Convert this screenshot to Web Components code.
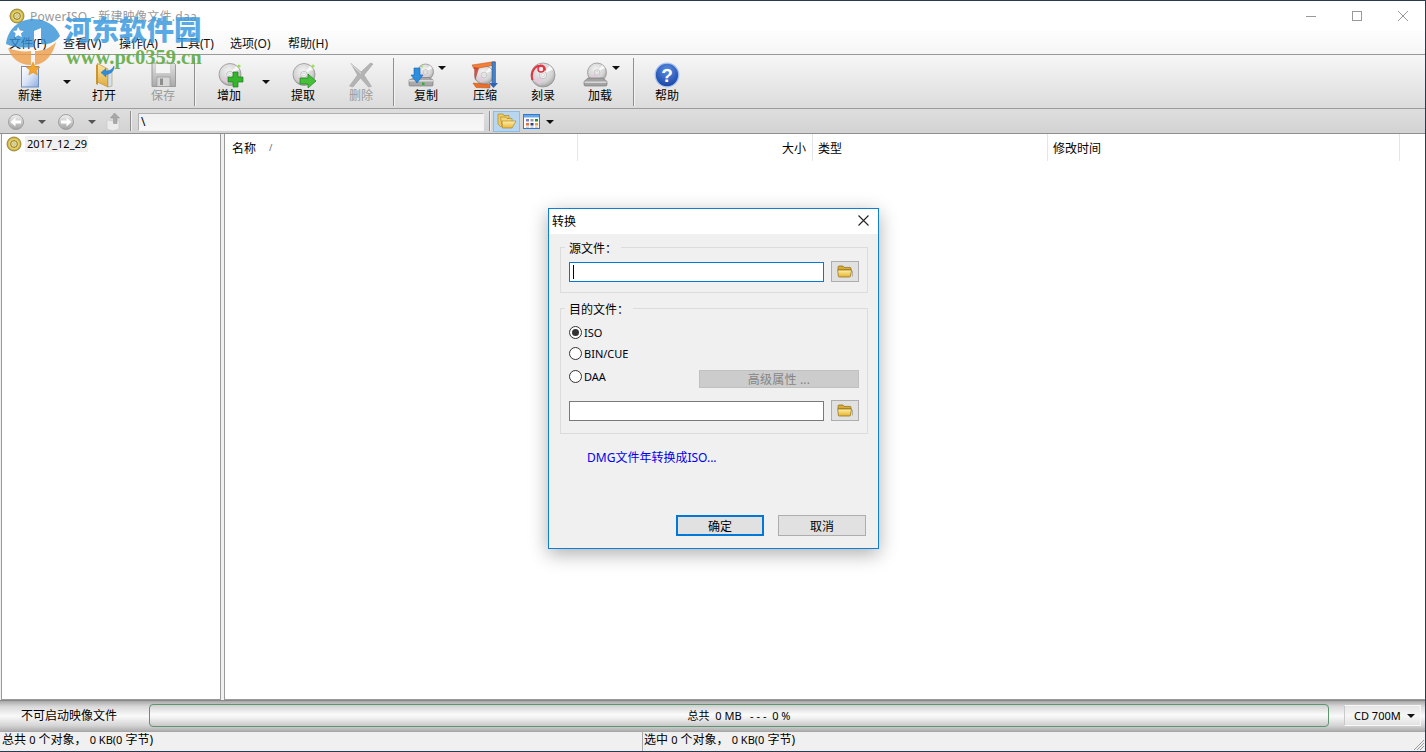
<!DOCTYPE html>
<html lang="zh">
<head>
<meta charset="utf-8">
<title>PowerISO</title>
<style>
  html, body { margin: 0; height: 100%; overflow: hidden; background: #f0f0f0; }
  body { font: 12px "Noto Sans", "Noto Sans CJK SC", sans-serif; color: #000; }
</style>
</head>
<body>
<app-window></app-window>
<script>
const UI_FONT = `"Noto Sans", "Noto Sans CJK SC", sans-serif`;

function disc(cx, cy, r, id) {
  return `
    <radialGradient id="${id}" cx="45%" cy="35%" r="75%">
      <stop offset="0" stop-color="#f4f4f4"/><stop offset=".6" stop-color="#d2d2d2"/><stop offset="1" stop-color="#8c8c8c"/>
    </radialGradient>
    <circle cx="${cx}" cy="${cy}" r="${r}" fill="url(#${id})" stroke="#8a8a8a" stroke-width=".7"/>
    <path d="M${cx - r * 0.85} ${cy + r * 0.4}L${cx - r * 0.1} ${cy + r * 0.1}L${cx - r * 0.2} ${cy + r * 0.85}Z" fill="#e6c8df" opacity=".8"/>
    <path d="M${cx + r * 0.1} ${cy - r * 0.15}L${cx + r * 0.55} ${cy - r * 0.8}L${cx + r * 0.85} ${cy - r * 0.45}Z" fill="#fff" opacity=".8"/>
    <circle cx="${cx}" cy="${cy}" r="${r * 0.3}" fill="#efefef" stroke="#a0a0a0" stroke-width=".5"/>
    <circle cx="${cx}" cy="${cy}" r="${r * 0.12}" fill="#fff" stroke="#aaa" stroke-width=".4"/>`;
}

function goldFolder(w, h) {
  return `<svg width="${w}" height="${h}" viewBox="0 0 16 13">
    <defs><linearGradient id="gf" x1="0" y1="0" x2="0" y2="1"><stop offset="0" stop-color="#fff0a8"/><stop offset="1" stop-color="#e4b32e"/></linearGradient></defs>
    <path d="M1 2.2Q1 1 2 1H6L7 2.4H13Q14 2.4 14 3.4V5H1Z" fill="#d8ab36" stroke="#8c6a14" stroke-width=".7"/>
    <path d="M.7 5H14.6L13.4 11.4Q13.3 12 12.6 12H2.2Q1.5 12 1.4 11.4Z" fill="url(#gf)" stroke="#8c6a14" stroke-width=".7"/>
    <path d="M15.4 6V11.6" stroke="#555" stroke-width=".8" opacity=".5"/>
  </svg>`;
}

const ICONS = {
  new: `<svg width="32" height="26" viewBox="0 0 32 26">
    <defs><linearGradient id="nw" x1="0" y1="0" x2="1" y2="1"><stop offset="0" stop-color="#fff"/><stop offset=".5" stop-color="#dbe5f7"/><stop offset="1" stop-color="#8fabdf"/></linearGradient></defs>
    <rect x="7.500" y="4.500" width="17" height="20.500" fill="url(#nw)" stroke="#6f8dbd"/>
    <path d="M19 0l2 4.600 5 .4-3.800 3.200 1.200 4.800-4.400-2.600-4.200 2.600 1.200-4.800L12 5l5-.4z" fill="#f3a52e" stroke="#e2861a" stroke-width=".5"/>
  </svg>`,
  open: `<svg width="32" height="26" viewBox="0 0 32 26">
    <defs><linearGradient id="op" x1="0" y1="0" x2="0" y2="1"><stop offset="0" stop-color="#fbe7a2"/><stop offset="1" stop-color="#e0ab3d"/></linearGradient></defs>
    <path d="M8 3l2-1v21l-2-1z" fill="#c99431"/>
    <path d="M9.500 1.500L20 7v18L9.500 20z" fill="url(#op)" stroke="#b58425" stroke-width=".6"/>
    <path d="M20 9l4 1v14l-4 1z" fill="#d4e2ef" stroke="#9a8a50" stroke-width=".5"/>
    <path d="M13 10.500l5-4v2.500c3 0 6-1 8-5 .4 4.500-2.500 8-8 8.500v2.500z" fill="#2d8fdc" stroke="#1865ad" stroke-width=".4"/>
  </svg>`,
  save: `<svg width="28" height="26" viewBox="0 0 28 26">
    <defs><linearGradient id="sv" x1="0" y1="0" x2="0" y2="1"><stop offset="0" stop-color="#e2e2e2"/><stop offset="1" stop-color="#a9a9a9"/></linearGradient></defs>
    <path d="M3 1H25L26.500 2.500V24.500H3Z" fill="url(#sv)" stroke="#9b9b9b"/>
    <rect x="6.500" y="1.500" width="15" height="10" fill="#f4f4f4" stroke="#bbb" stroke-width=".5"/>
    <rect x="8" y="15" width="13" height="9.500" fill="#d7d7d7" stroke="#919191" stroke-width=".6"/>
    <rect x="11" y="16.500" width="3" height="6.500" fill="#8e8e8e"/>
  </svg>`,
  add: `<svg width="30" height="26" viewBox="0 0 30 26">${disc(16, 12.500, 11, "da")}
    <circle cx="25" cy="4" r="1.600" fill="#9be34e"/>
    <path d="M19 10h5v5h5v5h-5v5h-5v-5h-5v-5h5z" fill="#35b52c" stroke="#1a7f1d" stroke-width=".7"/>
  </svg>`,
  extract: `<svg width="30" height="26" viewBox="0 0 30 26">${disc(16, 12.500, 11, "de")}
    <circle cx="25" cy="4" r="1.600" fill="#9be34e"/>
    <path d="M12 16h8v-4l8 7-8 7v-4h-8z" fill="#46c038" stroke="#1a7f1d" stroke-width=".7"/>
  </svg>`,
  del: `<svg width="26" height="26" viewBox="0 0 26 26">
    <path d="M3 1.500L13 10 22.500 1l2.500 1-9 11 7.500 11.500-3 .5L12.500 16 5 25l-3.500-1 8-11z" fill="#b4b4b4" stroke="#9a9a9a" stroke-width=".5"/>
    <path d="M3.500 2.500L13 11.500" stroke="#e4e4e4"/>
  </svg>`,
  copy: `<svg width="36" height="26" viewBox="-18 0 36 26">${disc(-0.5, 10, 8, "dc")}
    <path d="M-17 18L-11 15.500H3L7 18v5q0 1-1 1h-22q-1 0-1-1z" fill="#a9a9a9" stroke="#737373" stroke-width=".6"/>
    <path d="M-17 18h24v1.500h-24z" fill="#dcdcdc"/>
    <rect x="-4" y="20.500" width="2.500" height="2.500" fill="#31b33a"/>
    <circle cx="-4" cy="4.500" r="1" fill="#9be34e"/>
    <path d="M-12 6h6v7h3l-6 8-6-8h3z" fill="#2b8edf" stroke="#1663ac" stroke-width=".6"/>
  </svg>`,
  compress: `<svg width="28" height="28" viewBox="0 0 28 28">
    ${disc(13, 14, 9.500, "dz")}
    <path d="M1 4L24 .5v3.500L3 8z" fill="#f0803a" stroke="#b84a12" stroke-width=".5"/>
    <path d="M2 22l17 1.500v3.500L5 26.500z" fill="#ea6f2b" stroke="#b84a12" stroke-width=".5"/>
    <rect x="21" y="1" width="3.500" height="23" fill="#4780c4" stroke="#27518c" stroke-width=".5"/>
    <path d="M18 22h9l-4.500 5z" fill="#2b65b5"/>
    <path d="M3 6l5 1-4 13z" fill="#c33c28" opacity=".8"/>
  </svg>`,
  burn: `<svg width="26" height="26" viewBox="0 0 26 26">${disc(13, 13, 12, "db")}
    <path d="M2.500 18C0 10 5 4 10 3.500 14 3 15 6 15 8.500" fill="none" stroke="#e53341" stroke-width="2"/>
    <circle cx="11" cy="7" r="3" fill="none" stroke="#e53341" stroke-width="1.500"/>
  </svg>`,
  mount: `<svg width="36" height="26" viewBox="-18 0 36 26">${disc(-3, 10.500, 9.500, "dm")}
    <path d="M-16 19.500L-12 16H3L7 19.500v3q0 1.500-1.500 1.500h-20q-1.500 0-1.500-1.500z" fill="#a3a3a3" stroke="#707070" stroke-width=".6"/>
    <path d="M-15.500 19.500h22v1.500h-22z" fill="#d8d8d8"/>
  </svg>`,
  help: `<svg width="26" height="26" viewBox="0 0 26 26">
    <defs><radialGradient id="hp" cx="50%" cy="30%" r="75%"><stop offset="0" stop-color="#5d8fe4"/><stop offset="1" stop-color="#123f9f"/></radialGradient></defs>
    <circle cx="13" cy="13" r="11.800" fill="url(#hp)" stroke="#a9c4ee" stroke-width="1.300"/>
    <text x="13" y="20" text-anchor="middle" font-family="Liberation Sans, sans-serif" font-weight="700" font-size="19" fill="#fff">?</text>
  </svg>`,
  back: `<svg width="22" height="22" viewBox="0 0 22 22">
    <defs><linearGradient id="nv1" x1="0" y1="0" x2="0" y2="1"><stop offset="0" stop-color="#f2f2f2"/><stop offset="1" stop-color="#a2a2a2"/></linearGradient></defs>
    <circle cx="11" cy="11" r="7.500" fill="url(#nv1)" stroke="#a0a0a0"/>
    <path d="M5.500 11L10.500 6.500V9.500H16V12.500H10.500V15.500Z" fill="#fff"/>
  </svg>`,
  forward: `<svg width="22" height="22" viewBox="0 0 22 22">
    <defs><linearGradient id="nv2" x1="0" y1="0" x2="0" y2="1"><stop offset="0" stop-color="#f2f2f2"/><stop offset="1" stop-color="#a2a2a2"/></linearGradient></defs>
    <circle cx="11" cy="11" r="7.500" fill="url(#nv2)" stroke="#a0a0a0"/>
    <path d="M16.500 11L11.500 6.500V9.500H6V12.500H11.500V15.500Z" fill="#fff"/>
  </svg>`,
  up: `<svg width="20" height="20" viewBox="0 0 20 20">
    <path d="M4 8L10 9 16 8V17L10 19 4 17Z" fill="#ececec" stroke="#c8c8c8" stroke-width=".6"/>
    <path d="M11.500 1L16.500 6H14V11.500H10.500V6H7.500Z" fill="#a8a8a8" stroke="#8f8f8f" stroke-width=".5"/>
  </svg>`,
  folders: `<svg width="20" height="18" viewBox="0 0 20 18">
    <defs><linearGradient id="fs" x1="0" y1="0" x2="0" y2="1"><stop offset="0" stop-color="#fff0ae"/><stop offset="1" stop-color="#e7b63d"/></linearGradient></defs>
    <path d="M1 2H6L7 3.500H12V10L4 15 1 12Z" fill="#eccb67" stroke="#b28924" stroke-width=".7"/>
    <path d="M3.500 5H9L10 6.500H15V14H5Z" fill="#f2d67c" stroke="#b28924" stroke-width=".7"/>
    <path d="M5 9H19L15 16H5.500Z" fill="url(#fs)" stroke="#b28924" stroke-width=".7"/>
  </svg>`,
  views: `<svg width="17" height="15" viewBox="0 0 17 15">
    <rect x=".5" y=".5" width="16" height="14" fill="#fff" stroke="#2c7bd0"/>
    <rect x="1" y="1" width="15" height="2.500" fill="#69a7e4"/>
    <rect x="3" y="5" width="3" height="2.500" fill="#7e7ecc"/><rect x="7.500" y="5" width="3" height="2.500" fill="#9a9a9a"/><rect x="12" y="5" width="3" height="2.500" fill="#1d8f3e"/>
    <rect x="3" y="9" width="3" height="2.500" fill="#e8703a"/><rect x="7.500" y="9" width="3" height="2.500" fill="#27408f"/><rect x="12" y="9" width="3" height="2.500" fill="#e9a33b"/>
    <rect x="3" y="12.500" width="3" height="1.200" fill="#bbb"/><rect x="7.500" y="12.500" width="3" height="1.200" fill="#bbb"/><rect x="12" y="12.500" width="3" height="1.200" fill="#bbb"/>
  </svg>`,
  cd: `<svg width="16" height="16" viewBox="0 0 16 16">
    <defs><radialGradient id="cdg"><stop offset="0" stop-color="#fff6c0"/><stop offset=".7" stop-color="#e4d066"/><stop offset="1" stop-color="#b69a2c"/></radialGradient></defs>
    <circle cx="8" cy="8" r="7" fill="url(#cdg)" stroke="#8f7a28" stroke-width=".8"/>
    <circle cx="8" cy="8" r="3.400" fill="none" stroke="#7d6a22" stroke-width=".9"/>
    <circle cx="8" cy="8" r="1.300" fill="#fff" stroke="#7d6a22" stroke-width=".5"/>
  </svg>`
};

class ToolButton extends HTMLElement {
  connectedCallback() {
    const icon = this.getAttribute("icon");
    const label = this.getAttribute("label");
    this.attachShadow({ mode: "open" }).innerHTML = `
      <style>
        :host { display: flex; flex-direction: column; align-items: center; width: 58px; height: 53px; flex: none; font-size: 12px; color: ${this.hasAttribute("disabled") ? "#9a9a9a" : "#000"}; position: relative; }
        .icon { height: 28px; margin-top: 6px; display: flex; align-items: center; justify-content: center; }
        .label { line-height: 16px; margin-top: -1px; }
        .caret { position: absolute; left: 41px; top: 11px; width: 0; height: 0; border: 4px solid transparent; border-top: 4px solid #111; border-bottom: 0; }
      </style>
      <div class="icon">${ICONS[icon]}</div>
      <div class="label">${label}</div>
      ${this.hasAttribute("caret") ? '<span class="caret"></span>' : ""}
    `;
  }
}
customElements.define("tool-button", ToolButton);

class TitleBar extends HTMLElement {
  constructor() {
    super();
    this.attachShadow({ mode: "open" }).innerHTML = `
      <style>
        :host { display: flex; align-items: center; height: 29px; background: #fff; color: #9a9a9a; font-size: 12px; padding-left: 9px; }
        .cd { margin-right: 5px; margin-top: 1px; display: flex; }
        .title { flex: 1; letter-spacing: .25px; }
        .btns { display: flex; }
        .btn { width: 46px; height: 29px; display: flex; align-items: center; justify-content: center; }
      </style>
      <span class="cd">${ICONS.cd}</span>
      <span class="title">PowerISO - 新建映像文件.daa</span>
      <div class="btns">
        <div class="btn"><svg width="10" height="10"><path d="M0 5.500H10" stroke="#999"/></svg></div>
        <div class="btn"><svg width="10" height="10"><rect x=".5" y=".5" width="9" height="9" fill="none" stroke="#999"/></svg></div>
        <div class="btn" style="margin-right:-1px"><svg width="10" height="10"><path d="M0 0L10 10M10 0L0 10" stroke="#999"/></svg></div>
      </div>
    `;
  }
}
customElements.define("title-bar", TitleBar);

class MenuBar extends HTMLElement {
  constructor() {
    super();
    const items = [["文件(F)", 54], ["查看(V)", 56], ["操作(A)", 57], ["工具(T)", 54], ["选项(O)", 58], ["帮助(H)", 60]];
    this.attachShadow({ mode: "open" }).innerHTML = `
      <style>
        :host { display: flex; align-items: center; height: 23px; padding: 1px 0 0 9px; font-size: 12px; background: linear-gradient(#fdfdfd, #f6f6f6); color: #111; border-bottom: 1px solid #999; }
        span { flex: none; }
      </style>
      ${items.map(([t, w]) => `<span style="width:${w}px">${t}</span>`).join("")}
    `;
  }
}
customElements.define("menu-bar", MenuBar);

class MainToolbar extends HTMLElement {
  constructor() {
    super();
    this.attachShadow({ mode: "open" }).innerHTML = `
      <style>
        :host { display: flex; height: 53px; padding-left: 1px; background: linear-gradient(#f6f6f6, #dcdcdc); border-bottom: 1px solid #9c9c9c; }
        .sep { flex: none; width: 2px; height: 48px; margin-top: 3px; background: #8f8f8f; border-right: 1px solid #f4f4f4; box-sizing: border-box; }
        .drop { flex: none; width: 16px; position: relative; }
        .drop::after { content: ""; position: absolute; left: 4px; top: 25px; border: 4px solid transparent; border-top: 4px solid #111; border-bottom: 0; }
      </style>
      <tool-button icon="new" label="新建"></tool-button><div class="drop"></div>
      <tool-button icon="open" label="打开"></tool-button>
      <tool-button icon="save" label="保存" disabled style="margin-left:1px"></tool-button>
      <div class="sep" style="margin-left:2px;margin-right:4px"></div>
      <tool-button icon="add" label="增加"></tool-button><div class="drop"></div>
      <tool-button icon="extract" label="提取"></tool-button>
      <tool-button icon="del" label="删除" disabled></tool-button>
      <div class="sep" style="margin-left:3px;margin-right:2px"></div>
      <tool-button icon="copy" label="复制" caret></tool-button>
      <tool-button icon="compress" label="压缩" style="margin-left:1px"></tool-button>
      <tool-button icon="burn" label="刻录"></tool-button>
      <tool-button icon="mount" label="加载" caret style="margin-left:-1px"></tool-button>
      <div class="sep" style="margin-left:4px;margin-right:3px"></div>
      <tool-button icon="help" label="帮助"></tool-button>
    `;
  }
}
customElements.define("main-toolbar", MainToolbar);

class NavBar extends HTMLElement {
  constructor() {
    super();
    this.attachShadow({ mode: "open" }).innerHTML = `
      <style>
        :host { display: flex; align-items: center; height: 24px; background: linear-gradient(#dedede, #d2d2d2); border-bottom: 1px solid #8f8f8f; padding-left: 5px; }
        .i { display: flex; flex: none; margin-top: 1px; }
        .caret { flex: none; width: 0; height: 0; margin-top: 1px; border: 4px solid transparent; border-top: 4px solid #555; border-bottom: 0; }
        .sep { flex: none; width: 1px; height: 20px; background: #8f8f8f; box-shadow: 1px 0 #eee; }
        .path { flex: none; width: 346px; height: 18px; margin-top: 1px; box-sizing: border-box; background: linear-gradient(#f1f1f1, #f7f7f7); border: 1px solid #bdbdbd; border-color: #b0b0b0 #f2f2f2 #f2f2f2 #b0b0b0; line-height: 16px; padding-left: 2px; font-size: 12px; }
        .on { flex: none; width: 27px; height: 21px; background: #b9d6f1; border: 1px solid #8dbce8; box-sizing: border-box; display: flex; align-items: center; justify-content: center; }
      </style>
      <span class="i">${ICONS.back}</span>
      <span class="caret" style="margin-left:11px"></span>
      <span class="i" style="margin-left:9px">${ICONS.forward}</span>
      <span class="caret" style="margin-left:11px"></span>
      <span class="i" style="margin-left:7px">${ICONS.up}</span>
      <span class="sep" style="margin-left:7px"></span>
      <span class="path" style="margin-left:7px">\\</span>
      <span class="sep" style="margin-left:5px"></span>
      <span class="on" style="margin-left:3px">${ICONS.folders}</span>
      <span class="i" style="margin-left:3px">${ICONS.views}</span>
      <span class="caret" style="margin-left:6px;border-top-color:#111"></span>
    `;
  }
}
customElements.define("nav-bar", NavBar);

class TreePane extends HTMLElement {
  constructor() {
    super();
    this.attachShadow({ mode: "open" }).innerHTML = `
      <style>
        :host { display: block; width: 218px; flex: none; background: #fff; border: 1px solid #9a9a9a; border-top: 0; margin-left: 1px; }
        .row { display: flex; align-items: center; padding: 0 0 0 4px; height: 19px; }
        .name { background: #f0f0f0; padding: 0 1px 0 2px; line-height: 16px; margin-left: 3px; font-size: 11px; font-family: "Noto Sans", sans-serif; }
      </style>
      <div class="row">${ICONS.cd}<span class="name">2017_12_29</span></div>
    `;
  }
}
customElements.define("tree-pane", TreePane);

class ListPane extends HTMLElement {
  constructor() {
    super();
    this.attachShadow({ mode: "open" }).innerHTML = `
      <style>
        :host { display: block; flex: 1; min-width: 0; background: #fff; border: 1px solid #9a9a9a; border-top: 0; border-right: 0; margin-left: 3px; }
        .head { display: grid; grid-template-columns: 353px 235px 235px 352px; height: 27px; font-size: 12px; }
        .c { border-right: 1px solid #e5e5e5; padding: 0 6px 0 5px; display: flex; align-items: center; }
        .c.first { padding-left: 7px; }
        .sort { margin-left: 13px; margin-top: -1px; color: #666; font-size: 9px; }
        .r { justify-content: flex-end; }
      </style>
      <div class="head">
        <div class="c first">名称<span class="sort">/</span></div>
        <div class="c r">大小</div>
        <div class="c">类型</div>
        <div class="c">修改时间</div>
      </div>
    `;
  }
}
customElements.define("list-pane", ListPane);

class GroupBox extends HTMLElement {
  constructor() {
    super();
    this.attachShadow({ mode: "open" }).innerHTML = `
      <style>
        :host { display: block; border: 1px solid #dcdcdc; position: relative; padding: 14px 8px 9px 8px; }
        .legend { position: absolute; left: 4px; top: -8px; background: #f0f0f0; padding: 0 4px; font-size: 12px; line-height: 17px; }
      </style>
      <span class="legend"></span><slot></slot>
    `;
  }
  connectedCallback() {
    this.shadowRoot.querySelector(".legend").textContent = this.getAttribute("legend");
  }
}
customElements.define("group-box", GroupBox);

class PathField extends HTMLElement {
  connectedCallback() {
    const active = this.hasAttribute("active");
    this.attachShadow({ mode: "open" }).innerHTML = `
      <style>
        :host { display: flex; align-items: flex-start; height: 21px; }
        .input { width: 255px; height: 20px; box-sizing: border-box; background: #fff; border: 1px solid ${active ? "#0078d7" : "#7a7a7a"}; display: flex; align-items: center; padding-left: 3px; }
        .cursor { width: 1px; height: 14px; background: #000; }
        .btn { margin-left: 7px; width: 28px; height: 21px; margin-top: -1px; box-sizing: border-box; background: #e1e1e1; border: 1px solid #adadad; display: flex; align-items: center; justify-content: center; }
      </style>
      <div class="input">${active ? '<span class="cursor"></span>' : ""}</div>
      <div class="btn">${goldFolder(16, 13)}</div>
    `;
  }
}
customElements.define("path-field", PathField);

class RadioOption extends HTMLElement {
  connectedCallback() {
    const on = this.hasAttribute("checked");
    this.attachShadow({ mode: "open" }).innerHTML = `
      <style>
        :host { display: flex; align-items: center; font-size: 11px; color: #001; }
        .dot { width: 13px; height: 13px; box-sizing: border-box; border: 1px solid #333; border-radius: 50%; background: #fff; margin-right: 2px; display: flex; align-items: center; justify-content: center; }
        .dot i { width: 7px; height: 7px; border-radius: 50%; background: #333; }
      </style>
      <span class="dot">${on ? "<i></i>" : ""}</span><span>${this.getAttribute("label")}</span>
    `;
  }
}
customElements.define("radio-option", RadioOption);

class ConvertDialog extends HTMLElement {
  constructor() {
    super();
    this.attachShadow({ mode: "open" }).innerHTML = `
      <style>
        :host { position: absolute; left: 548px; top: 207px; width: 331px; height: 341px; box-sizing: border-box; background: #f0f0f0; border: 1px solid #0f7fd6; box-shadow: 0 5px 18px rgba(0,0,0,.32); display: flex; flex-direction: column; font-size: 12px; }
        .head { height: 25px; box-sizing: border-box; padding: 0 0 2px 3px; background: #fff; display: flex; align-items: center; flex: none; }
        .head span { flex: 1; }
        .head svg { margin-right: 9px; }
        .body { padding: 13px 10px 0 11px; flex: 1; display: flex; flex-direction: column; }
        .dest { margin-top: 15px; padding-bottom: 11px; }
        .opts { display: grid; grid-template-columns: 130px 160px; grid-template-rows: 21px 21px 24px; margin-top: -1px; align-items: center; }
        .adv { grid-column: 2; grid-row: 3; height: 18px; background: #cccccc; border: 1px solid #c0c0c0; box-sizing: border-box; color: #858585; display: flex; align-items: center; justify-content: center; margin-top: 6px; letter-spacing: .2px; }
        .dest path-field { margin-top: 13px; }
        .link { color: #0000ee; margin: 15px 0 0 27px; line-height: 17px; }
        .foot { margin-top: auto; padding-bottom: 12px; display: flex; justify-content: flex-end; gap: 14px; padding-right: 2px; }
        .b { width: 88px; height: 21px; box-sizing: border-box; background: #e1e1e1; border: 1px solid #adadad; display: flex; align-items: center; justify-content: center; }
        .b.def { border: 2px solid #0078d7; }
      </style>
      <div class="head"><span>转换</span>
        <svg width="11" height="11"><path d="M.5 .5L10.500 10.500M10.500 .5L.5 10.500" stroke="#222" stroke-width="1.100"/></svg>
      </div>
      <div class="body">
        <group-box legend="源文件："><path-field active></path-field></group-box>
        <group-box class="dest" legend="目的文件：">
          <div class="opts">
            <radio-option label="ISO" checked style="grid-column:1;grid-row:1"></radio-option>
            <radio-option label="BIN/CUE" style="grid-column:1;grid-row:2"></radio-option>
            <radio-option label="DAA" style="grid-column:1;grid-row:3"></radio-option>
            <div class="adv">高级属性 ...</div>
          </div>
          <path-field></path-field>
        </group-box>
        <div class="link">DMG文件年转换成ISO...</div>
        <div class="foot"><div class="b def">确定</div><div class="b">取消</div></div>
      </div>
    `;
  }
}
customElements.define("convert-dialog", ConvertDialog);

class InfoBar extends HTMLElement {
  constructor() {
    super();
    this.attachShadow({ mode: "open" }).innerHTML = `
      <style>
        :host { display: flex; align-items: center; height: 31px; flex: none; box-sizing: border-box; padding-bottom: 2px; background: linear-gradient(#a8a8a8 0, #d8d8d8 18%, #fafafa 50%, #d4d4d4 82%, #aeaeae 100%); border-top: 1px solid #888; font-size: 12px; }
        .label { width: 149px; flex: none; box-sizing: border-box; padding: 0 0 1px 21px; }
        .progress { flex: none; width: 1180px; height: 23px; box-sizing: border-box; padding-bottom: 1px; border: 1px solid #5f9470; border-radius: 4px; background: linear-gradient(#cfcfcf, #fbfbfb 45%, #f2f2f2 60%, #c8c8c8); display: flex; align-items: center; justify-content: center; font-size: 11px; white-space: pre; }
        .size { flex: none; margin-left: 15px; width: 77px; height: 21px; box-sizing: border-box; border: 1px solid #f6f6f6; border-color: #f8f8f8 #f8f8f8 #f8f8f8 #c9c9c9; display: flex; align-items: center; padding-left: 9px; font-size: 11px; position: relative; background: linear-gradient(#e6e6e6, #f6f6f6 50%, #e2e2e2); }
        .size::after { content: ""; position: absolute; right: 5px; top: 8px; border: 4px solid transparent; border-top: 4px solid #111; border-bottom: 0; }
      </style>
      <div class="label">不可启动映像文件</div>
      <div class="progress">总共  0 MB   - - -  0 %</div>
      <div class="size">CD 700M</div>
    `;
  }
}
customElements.define("info-bar", InfoBar);

class StatusBar extends HTMLElement {
  constructor() {
    super();
    this.attachShadow({ mode: "open" }).innerHTML = `
      <style>
        :host { display: flex; height: 19px; flex: none; align-items: center; background: #f0f0f0; border-top: 1px solid #a8a8a8; font-size: 12px; position: relative; white-space: pre; }
        .a { width: 643px; flex: none; padding-left: 2px; box-sizing: border-box; height: 100%; line-height: 16px; border-right: 1px solid #a8a8a8; }
        .b { padding-left: 1px; line-height: 16px; height: 100%; }
        svg { position: absolute; right: 0; bottom: 0; }
        .n { font-size: 11px; }
      </style>
      <div class="a">总共 <span class="n">0</span> 个对象， <span class="n">0 KB(0</span> 字节)</div>
      <div class="b">选中 <span class="n">0</span> 个对象， <span class="n">0 KB(0</span> 字节)</div>
      <svg width="12" height="12"><path d="M11 1L1 11M11 4L4 11M11 7L7 11" stroke="#9a9a9a"/></svg>
    `;
  }
}
customElements.define("status-bar", StatusBar);

class WaterMark extends HTMLElement {
  constructor() {
    super();
    this.attachShadow({ mode: "open" }).innerHTML = `
      <style>
        :host { position: absolute; left: 5px; top: 11px; width: 200px; height: 56px; pointer-events: none; }
        svg { position: absolute; left: 0; top: 6px; opacity: .78; }
        .cn { position: absolute; left: 59px; top: -2px; font: 900 27.500px/36px "Noto Sans CJK SC", sans-serif; color: #3d9ce0; opacity: .85; white-space: nowrap; }
        .url { position: absolute; left: 61px; top: 34px; font: 700 20.500px/22px "Liberation Serif", serif; color: #62ab45; opacity: .9; white-space: nowrap; }
      </style>
      <svg width="56" height="48" viewBox="0 0 56 48">
        <path d="M1 26C3 10 15 1 28 1c12 0 23 6 27 17-5 7-13 9-19 8V10l-7 3v16C20 30 10 30 1 26z" fill="#2f8fd6"/>
        <path d="M3 30c8 3 16 4 23 3v14C14 47 6 40 3 30z" fill="#ee9c45"/>
        <path d="M30 33c7 0 14-2 21-9-3 13-11 22-21 23z" fill="#ee9c45"/>
        <path d="M13 9l2 3.500 3.800.5-2.800 2.500.8 3.800-3.500-2-3.400 2 .8-3.800L8 13l3.800-.5z" fill="#fff"/>
      </svg>
      <div class="cn">河东软件园</div>
      <div class="url">www.pc0359.cn</div>
    `;
  }
}
customElements.define("water-mark", WaterMark);

class AppWindow extends HTMLElement {
  constructor() {
    super();
    this.attachShadow({ mode: "open" }).innerHTML = `
      <style>
        :host { display: flex; flex-direction: column; height: 752px; width: 1426px; box-sizing: border-box; position: relative; overflow: hidden; border-top: 1px solid #2a3b4f; border-bottom: 1px solid #2a3b4f; border-right: 1px solid #2a3b4f; background: #f0f0f0; font-family: ${UI_FONT}; }
        .panes { flex: 1; min-height: 0; display: flex; }
      </style>
      <title-bar></title-bar>
      <menu-bar></menu-bar>
      <main-toolbar></main-toolbar>
      <nav-bar></nav-bar>
      <div class="panes"><tree-pane></tree-pane><list-pane></list-pane></div>
      <info-bar></info-bar>
      <status-bar></status-bar>
      <convert-dialog></convert-dialog>
      <water-mark></water-mark>
    `;
  }
}
customElements.define("app-window", AppWindow);
</script>
</body>
</html>
